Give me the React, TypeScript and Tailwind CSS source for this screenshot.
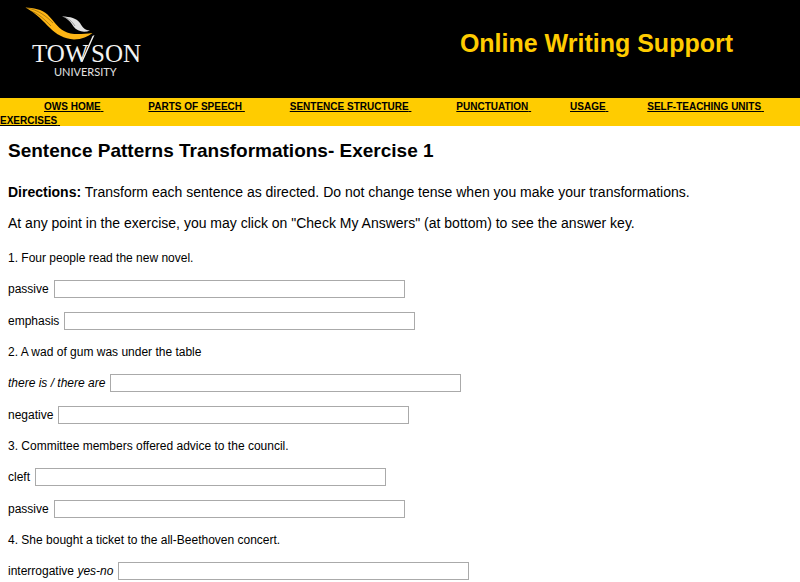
import clsx from "clsx";
import type { ReactNode } from "react";

interface Prompt {
  id: string;
  label: ReactNode;
}

interface Question {
  text: string;
  prompts: Prompt[];
}

const NAV_LINKS = [
  { label: "OWS HOME", spacing: "mr-[41px]" },
  { label: "PARTS OF SPEECH", spacing: "mr-[41px]" },
  { label: "SENTENCE STRUCTURE", spacing: "mr-[41px]" },
  { label: "PUNCTUATION", spacing: "mr-[35px]" },
  { label: "USAGE", spacing: "mr-[35px]" },
  { label: "SELF-TEACHING UNITS", spacing: "" },
  { label: "EXERCISES", spacing: "" },
];

const QUESTIONS: Question[] = [
  {
    text: "1. Four people read the new novel.",
    prompts: [
      { id: "q1-passive", label: "passive" },
      { id: "q1-emphasis", label: "emphasis" },
    ],
  },
  {
    text: "2. A wad of gum was under the table",
    prompts: [
      { id: "q2-there", label: <em>there is / there are</em> },
      { id: "q2-negative", label: "negative" },
    ],
  },
  {
    text: "3. Committee members offered advice to the council.",
    prompts: [
      { id: "q3-cleft", label: "cleft" },
      { id: "q3-passive", label: "passive" },
    ],
  },
  {
    text: "4. She bought a ticket to the all-Beethoven concert.",
    prompts: [
      {
        id: "q4-interrogative",
        label: (
          <>
            interrogative <em>yes-no</em>
          </>
        ),
      },
    ],
  },
];

function Logo() {
  return (
    <svg
      viewBox="0 0 180 98"
      className="h-[98px] w-[180px] shrink-0"
      role="img"
      aria-label="Towson University"
    >
      {/* Gold wing */}
      <path
        d="M25.500 7.500C33 8 42 9 47.500 14.500C54 21 57 27 64 31C71 35 80 34.500 92.500 33C88 36.500 82 39.500 74 39.500C64 39 56 34 50 28C43 21 37 14 25.500 7.500Z"
        fill="#fdb515"
      />
      {/* Feather streaks */}
      <path
        d="M27 8C38 10 45 15 53 23M31 11C39 14 44 19 51 26"
        fill="none"
        stroke="#000000"
        strokeOpacity="0.5"
        strokeWidth="0.6"
      />
      {/* White wing */}
      <path
        d="M62 16.500C70 16.500 77 18.500 80 23C82.500 27 84 30 90 30.500C84 33 77 31.500 73.500 26.500C71 22.500 68 18.500 62 16.500Z"
        fill="#e2e2e2"
      />
      <path
        d="M64 17C70 19 73 23 75 26"
        fill="none"
        stroke="#000000"
        strokeOpacity="0.6"
        strokeWidth="0.5"
      />
      <text x="32" y="62" fill="#f3f3f3" className="font-['Liberation_Serif',serif] text-[25px]">
        TOW
      </text>
      <text x="91" y="62" fill="#f3f3f3" className="font-['Liberation_Serif',serif] text-[25px]">
        SON
      </text>
      {/* Long right stroke of the W */}
      <path d="M81 62L92.500 36L94.500 35L82.500 62Z" fill="#f3f3f3" />
      <text x="54" y="76" fill="#e2e2e2" className="font-[Lato,sans-serif] text-[11px]">
        UNIVERSITY
      </text>
    </svg>
  );
}

function AnswerRow({ id, label }: Prompt) {
  return (
    <div className="flex items-center gap-[5px]">
      <label htmlFor={id}>{label}</label>
      <input
        id={id}
        type="text"
        className="h-[18px] w-[351px] border border-[#aaaaaa] bg-white px-0.5"
      />
    </div>
  );
}

export default function App() {
  return (
    <div className="bg-white font-['Liberation_Sans',Arial,sans-serif] text-black">
      <header className="flex items-center justify-between bg-black">
        <Logo />
        <h1 className="mr-[67px] pb-3 text-[25px] leading-8 font-bold text-[#ffcc00]">
          Online Writing Support
        </h1>
      </header>

      <nav className="bg-[#ffcc00] indent-11 text-[14px] leading-[14px] font-bold">
        {NAV_LINKS.map(({ label, spacing }) => (
          <span key={label}>
            <a
              href="#"
              className={clsx("text-[10px] leading-[10px] whitespace-nowrap underline", spacing)}
            >
              {label}&nbsp;
            </a>{" "}
          </span>
        ))}
      </nav>

      <main className="px-2 pt-[13px]">
        <h2 className="text-[19px] leading-6 font-bold">
          Sentence Patterns Transformations- Exercise 1
        </h2>
        <div className="mt-[21px] flex flex-col gap-[15px] text-[14px] leading-4">
          <p>
            <strong>Directions:</strong> Transform each sentence as directed. Do not change tense
            when you make your transformations.
          </p>
          <p>
            At any point in the exercise, you may click on "Check My Answers" (at bottom) to see
            the answer key.
          </p>
        </div>

        <form className="mt-[19px] flex flex-col gap-[14px] text-[12px] leading-4">
          {QUESTIONS.map((question) => (
            <fieldset key={question.text} className="flex flex-col gap-[14px]">
              <p>{question.text}</p>
              {question.prompts.map((prompt) => (
                <AnswerRow key={prompt.id} {...prompt} />
              ))}
            </fieldset>
          ))}
        </form>
      </main>
    </div>
  );
}
